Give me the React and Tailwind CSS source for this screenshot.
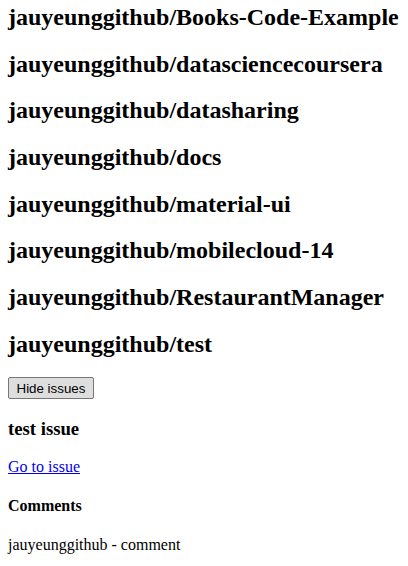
export default function App() {
  const repos = [
    "Books-Code-Example",
    "datasciencecoursera",
    "datasharing",
    "docs",
    "material-ui",
    "mobilecloud-14",
    "RestaurantManager",
    "test",
  ];
  return (
    <div className="px-2 pt-[4px] pb-4 bg-white text-black font-['Liberation_Serif','Times_New_Roman',serif]">
      {repos.map((r, i) => (
        <h2
          key={r}
          className={`text-[24px] font-bold leading-[27px] whitespace-nowrap ${i === 0 ? "mt-0" : "mt-[19.7px]"} mb-[19.2px]`}
        >
          jauyeunggithub/{r}
        </h2>
      ))}
      <button className="block font-['Liberation_Sans',Arial,sans-serif] text-[13.333px] leading-[normal] px-[7.5px] py-[2.5px] border border-[#767676] rounded-[2px] bg-[#dedede] text-black">
        Hide issues
      </button>
      <h3 className="text-[18.72px] font-bold leading-[21.5px] mt-[18.72px] mb-[18.72px]">test issue</h3>
      <p className="text-[16px] leading-[18px] my-[16px]">
        <a href="#" className="text-[#0000ee] underline">Go to issue</a>
      </p>
      <h4 className="text-[16px] font-bold leading-[18px] my-[21.28px]">Comments</h4>
      <p className="text-[16px] leading-[18px] my-[16px]">jauyeunggithub - comment</p>
    </div>
  );
}
